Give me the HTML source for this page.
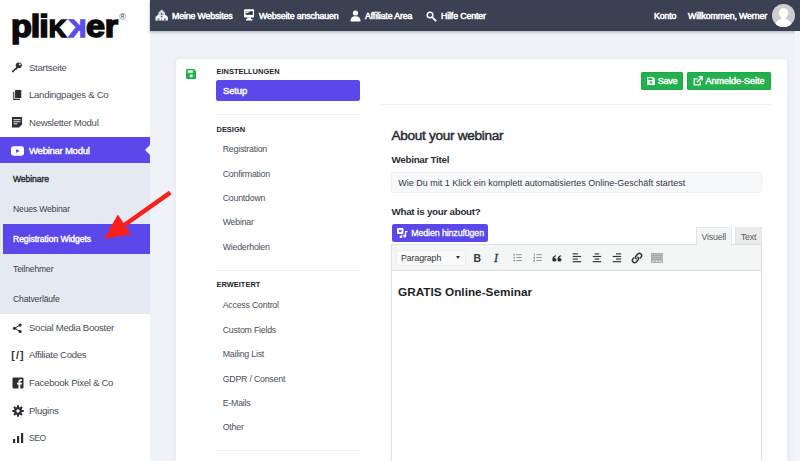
<!DOCTYPE html>
<html lang="de">
<head>
<meta charset="utf-8">
<title>plikker – Webinar Setup</title>
<style>
*{box-sizing:border-box;margin:0;padding:0}
html,body{width:800px;height:461px;overflow:hidden}
body{background:#eff2f7;font-family:"Liberation Sans",Arial,sans-serif;color:#3a3f4a;position:relative;font-size:10px}
.abs{position:absolute}
#sidebar{position:absolute;left:0;top:0;width:150px;height:461px;background:#fff}
#logo{position:absolute;left:0;top:0;width:150px;height:50px;font-weight:bold;font-size:31px;line-height:40px;color:#0b0b0b;white-space:nowrap}
#logo span{position:absolute;top:6.5px;-webkit-text-stroke:1.6px #0b0b0b;letter-spacing:-0.3px}
#logo .k{font-size:23px;text-transform:uppercase;top:8.8px;letter-spacing:0}
#logo .k2{transform:scaleX(-1);color:#5b4ee6;-webkit-text-stroke:1.6px #5b4ee6}
#logo sup{position:absolute;left:119.3px;top:11.8px;font-size:9px;font-weight:normal;line-height:10px;color:#444}
.nav{position:absolute;left:0;width:150px;height:28px;line-height:28px;font-size:9.6px;color:#4a4f58;white-space:nowrap;letter-spacing:-0.29px}
.nav span{position:absolute;left:29px;top:0}
.nav svg{position:absolute;left:12px;top:8px;width:12px;height:12px}
.nav.active{background:#5b48ea;color:#fff}
.nav.active span{-webkit-text-stroke:0.4px #fff}
#submenu{position:absolute;left:0;top:163px;width:150px;height:150.6px;background:#e5e9f1}
.sub{position:absolute;left:0;width:150px;height:30px;line-height:30px;font-size:8.6px;color:#3c4048;white-space:nowrap;padding-left:13px;letter-spacing:-0.17px}
.sub.b{color:#2b2e35;-webkit-text-stroke:0.4px #2b2e35;letter-spacing:-0.1px}
.sub.active{left:3px;width:147px;padding-left:10px;background:#5b48ea;color:#fff;-webkit-text-stroke:0.4px #fff;letter-spacing:-0.06px}
#topbar{position:absolute;left:150px;top:0;width:650px;height:30.6px;background:#3b4053;color:#fff;box-shadow:0 1px 3px rgba(40,45,60,.35)}
.tn{position:absolute;top:0;height:32px;line-height:32px;font-size:8.8px;color:#fff;white-space:nowrap;letter-spacing:-0.14px;-webkit-text-stroke:0.5px #fff}
.ti{position:absolute}
#card{position:absolute;left:176px;top:59px;width:610.8px;height:410px;background:#fff;border-radius:3px 3px 0 0;box-shadow:0 0 4px rgba(120,130,160,.12)}
.hd{position:absolute;left:216.5px;font-size:7.4px;font-weight:bold;color:#22252c;letter-spacing:0.05px;line-height:10px;white-space:nowrap}
.mi{position:absolute;left:222.7px;font-size:8.8px;color:#4a4f58;line-height:12px;white-space:nowrap;letter-spacing:-0.22px}
.hr{position:absolute;height:1px;background:#f0f2f5}
.btn{position:absolute;color:#fff;white-space:nowrap;border-radius:2.2px;-webkit-text-stroke:0.45px #fff}
.lbl{position:absolute;left:391.5px;font-weight:bold;color:#2b2e35;font-size:9.8px;line-height:12px;white-space:nowrap;letter-spacing:-0.27px}
</style>
</head>
<body>

<div id="sidebar">
  <div id="logo" title="plikker"><span style="left:11.2px;letter-spacing:-0.9px;transform:scaleX(1.1);transform-origin:0 0">pli</span><span class="k" style="left:49px;transform:scaleX(1.04);transform-origin:0 0">k</span><span class="k k2" style="left:68.6px;transform:scaleX(-1.04)">k</span><span style="left:86px;transform:scaleX(1.1);transform-origin:0 0;letter-spacing:-0.3px">er</span><sup>®</sup></div>

  <div class="nav" style="top:53.7px"><svg viewBox="0 0 12 12" style="width:11.4px;height:10.6px;left:11.4px;top:8.4px" preserveAspectRatio="none"><circle cx="8.2" cy="3.8" r="3.2" fill="#2b2e35"/><circle cx="9.2" cy="2.8" r="1" fill="#fff"/><path d="M6 5.5 L1 10.5 L1 11.5 L3 11.5 L3 10.3 L4.2 10.3 L4.2 9.1 L5.4 9.1 L7 7.2Z" fill="#2b2e35"/></svg><span>Startseite</span></div>
  <div class="nav" style="top:81.3px"><svg viewBox="0 0 12 12" style="width:10.6px;height:11.4px;left:11.6px;top:8.2px" preserveAspectRatio="none"><rect x="3.5" y="1" width="7" height="8.5" fill="#2b2e35"/><path d="M2 3 V11 H9" fill="none" stroke="#2b2e35" stroke-width="1.2"/></svg><span>Landingpages &amp; Co</span></div>
  <div class="nav" style="top:108.7px"><svg viewBox="0 0 12 12" style="width:12px;height:12.6px;left:11.2px;top:7.6px" preserveAspectRatio="none"><path d="M1 1 H11 V8 L8 11 H1Z" fill="#2b2e35"/><path d="M2.5 3.5H9.5M2.5 5.5H9.5M2.5 7.5H6.5" stroke="#fff" stroke-width="0.9"/></svg><span>Newsletter Modul</span></div>
  <div class="nav active" style="top:136.7px;height:26.6px;line-height:27px"><svg viewBox="0 0 14 10" style="left:11px;top:9px;width:13px;height:10px"><rect x="0" y="0" width="14" height="10" rx="2.6" fill="#fff"/><path d="M5.5 2.8 L9.3 5 L5.5 7.2Z" fill="#5b48ea"/></svg><span>Webinar Modul</span>
    <i style="position:absolute;right:0;top:8.3px;width:0;height:0;border-top:5.2px solid transparent;border-bottom:5.2px solid transparent;border-right:5.3px solid #eff2f7"></i>
  </div>
  <div id="submenu"></div>
  <div class="sub b" style="top:163.9px">Webinare</div>
  <div class="sub" style="top:193.7px">Neues Webinar</div>
  <div class="sub active" style="top:224.3px;height:29.4px">Registration Widgets</div>
  <div class="sub" style="top:253.9px">Teilnehmer</div>
  <div class="sub" style="top:283.9px">Chatverläufe</div>

  <div class="nav" style="top:313.9px"><svg viewBox="0 0 12 12" style="width:10.6px;height:10.6px;top:8.7px"><path d="M3 6 L9 2.5 M3 6 L9 9.5" stroke="#2b2e35" stroke-width="1.1"/><circle cx="2.8" cy="6" r="1.8" fill="#2b2e35"/><circle cx="9.2" cy="2.4" r="1.8" fill="#2b2e35"/><circle cx="9.2" cy="9.6" r="1.8" fill="#2b2e35"/></svg><span>Social Media Booster</span></div>
  <div class="nav" style="top:341.4px"><b style="position:absolute;left:11.3px;top:-0.5px;font-size:10.5px;letter-spacing:1.2px;color:#2b2e35">[/]</b><span>Affiliate Codes</span></div>
  <div class="nav" style="top:368.9px"><svg viewBox="0 0 12 12"><rect x="0.5" y="0.5" width="11" height="11" rx="1" fill="#2b2e35"/><path d="M8.3 12 V7.5 H9.8 L10 5.8 H8.3 V4.8 C8.3 4.2 8.5 4 9.1 4 H10 V2.4 C9.7 2.35 9.2 2.3 8.7 2.3 C7.3 2.3 6.5 3.1 6.5 4.6 V5.8 H5 V7.5 H6.5 V12Z" fill="#fff"/></svg><span>Facebook Pixel &amp; Co</span></div>
  <div class="nav" style="top:396.7px"><svg viewBox="0 0 12 12"><g fill="#2b2e35"><circle cx="6" cy="6" r="3.9"/><rect x="5" y="0.3" width="2" height="11.4"/><rect x="5" y="0.3" width="2" height="11.4" transform="rotate(45 6 6)"/><rect x="5" y="0.3" width="2" height="11.4" transform="rotate(90 6 6)"/><rect x="5" y="0.3" width="2" height="11.4" transform="rotate(135 6 6)"/></g><circle cx="6" cy="6" r="1.7" fill="#fff"/></svg><span>Plugins</span></div>
  <div class="nav" style="top:424px"><svg viewBox="0 0 12 12"><rect x="1" y="7" width="2.2" height="4" fill="#2b2e35"/><rect x="5" y="4" width="2.2" height="7" fill="#2b2e35"/><rect x="9" y="1" width="2.2" height="10" fill="#2b2e35"/></svg><span style="font-size:8.6px;letter-spacing:-0.5px">SEO</span></div>
</div>

<div id="topbar"></div>
<svg class="ti" style="left:155.4px;top:8.9px" width="13.4" height="12.4" viewBox="0 0 13.4 12.4"><path d="M6.7 0.4 L10 3.6 V7 H3.4 V3.6Z" fill="#d4d6dc"/><path d="M3.5 5.2 L6.6 8 V11.6 H0.5 V8Z" fill="#f4f5f7"/><path d="M9.9 5.2 L12.9 8 V11.6 H6.8 V8Z" fill="#f4f5f7"/><circle cx="6.7" cy="5" r="0.9" fill="#6b7080"/><path d="M2.6 11.6 V10.2 A0.9 0.9 0 0 1 4.4 10.2 V11.6Z M9 11.6 V10.2 A0.9 0.9 0 0 1 10.8 10.2 V11.6Z" fill="#6b7080"/></svg>
<div class="tn" style="left:172px">Meine Websites</div>
<svg class="ti" style="left:243.8px;top:9.4px" width="10.4" height="12" viewBox="0 0 10.4 12"><rect x="0" y="0.2" width="10.4" height="8.2" rx="1.2" fill="#fff"/><path d="M1.6 2.2 H8.8 V5.8 H1.6Z" fill="#2c3042"/><path d="M1.6 4.6 L5 3.6 L6.4 2.2 H1.6Z" fill="#e4e6ea"/><path d="M3.6 8.4 H6.8 L7.2 10 H8.4 V11.6 H2 V10 H3.2Z" fill="#fff"/></svg>
<div class="tn" style="left:259px">Webseite anschauen</div>
<svg class="ti" style="left:350px;top:10px" width="11" height="12" viewBox="0 0 11 12"><circle cx="5.5" cy="3" r="2.6" fill="#fff"/><path d="M0.5 11.5 C0.5 7.5 2.5 6.2 5.5 6.2 C8.5 6.2 10.5 7.5 10.5 11.5Z" fill="#fff"/></svg>
<div class="tn" style="left:365px">Affiliate Area</div>
<svg class="ti" style="left:426px;top:11px" width="10.5" height="10.5" viewBox="0 0 12 12"><circle cx="4.6" cy="4.6" r="3.2" fill="none" stroke="#fff" stroke-width="1.7"/><path d="M7 7 L11 11" stroke="#fff" stroke-width="2.2" stroke-linecap="round"/></svg>
<div class="tn" style="left:441px">Hilfe Center</div>
<div class="tn" style="left:654px">Konto</div>
<div class="tn" style="left:688px">Willkommen, Werner</div>
<svg class="ti" style="left:771.8px;top:3.8px" width="23" height="23" viewBox="0 0 24 24"><defs><clipPath id="av"><circle cx="12" cy="12" r="12"/></clipPath></defs><circle cx="12" cy="12" r="12" fill="#cecece"/><g clip-path="url(#av)" fill="#fff"><circle cx="12" cy="9.3" r="4.9"/><rect x="9.6" y="12" width="4.8" height="5"/><ellipse cx="12" cy="24" rx="9.2" ry="8.6"/></g></svg>

<div class="abs" style="left:795px;top:31px;width:5px;height:430px;background:#f3f5f9"></div>
<div id="card"></div>

<!-- green save icon -->
<svg class="abs" style="left:186px;top:69px" width="10.4" height="10" viewBox="0 0 11 11" preserveAspectRatio="none"><path d="M1.2 0 H8.3 L11 2.7 V9.8 Q11 11 9.8 11 H1.2 Q0 11 0 9.8 V1.2 Q0 0 1.2 0Z" fill="#22b14c"/><rect x="1.8" y="1.5" width="5.6" height="2.6" fill="#fff"/><circle cx="5.5" cy="7.4" r="1.7" fill="#fff"/></svg>

<div class="hd" style="top:66.8px">EINSTELLUNGEN</div>
<div class="btn" style="left:216px;top:80px;width:144px;height:21px;background:#5b48ea;font-size:9.4px;line-height:21px;padding-left:7px;letter-spacing:-0.1px">Setup</div>
<div class="hr" style="left:216px;top:114px;width:144px"></div>
<div class="hd" style="top:124.5px">DESIGN</div>
<div class="mi" style="top:143.2px">Registration</div>
<div class="mi" style="top:167.5px">Confirmation</div>
<div class="mi" style="top:192px">Countdown</div>
<div class="mi" style="top:216.3px">Webinar</div>
<div class="mi" style="top:240.7px">Wiederholen</div>
<div class="hr" style="left:216px;top:270px;width:144px"></div>
<div class="hd" style="top:280.3px">ERWEITERT</div>
<div class="mi" style="top:299.2px">Access Control</div>
<div class="mi" style="top:323.5px">Custom Fields</div>
<div class="mi" style="top:347.5px">Mailing List</div>
<div class="mi" style="top:372.5px">GDPR / Consent</div>
<div class="mi" style="top:396.5px">E-Mails</div>
<div class="mi" style="top:420.5px">Other</div>
<div class="hr" style="left:216px;top:450px;width:144px"></div>

<!-- right column -->
<div class="btn" style="left:641.2px;top:72px;width:42px;height:18.2px;background:#22b14c;box-shadow:inset 0 0 0 1px #1fa646;font-size:9px;line-height:18px;padding-left:16.5px;letter-spacing:-0.25px">Save
  <svg class="abs" style="left:6px;top:5px" width="8" height="8" viewBox="0 0 11 11"><path d="M1.2 0 H8.3 L11 2.7 V9.8 Q11 11 9.8 11 H1.2 Q0 11 0 9.8 V1.2 Q0 0 1.2 0Z" fill="#fff"/><rect x="1.8" y="1.5" width="5.6" height="2.6" fill="#22b14c"/><circle cx="5.5" cy="7.4" r="1.7" fill="#22b14c"/></svg>
</div>
<div class="btn" style="left:687px;top:72px;width:84.3px;height:18.2px;background:#22b14c;box-shadow:inset 0 0 0 1px #1fa646;font-size:9px;line-height:18px;padding-left:18.4px">Anmelde-Seite
  <svg class="abs" style="left:6px;top:4px" width="10" height="10" viewBox="0 0 10 10"><path d="M7.2 5.5 V8.8 H1.2 V2.8 H4.5" fill="none" stroke="#fff" stroke-width="1.3"/><path d="M3.8 6.2 L8.8 1.2 M5.6 0.8 H9.2 V4.4" fill="none" stroke="#fff" stroke-width="1.4"/></svg>
</div>
<div class="hr" style="left:379px;top:104px;width:394px"></div>

<div class="abs" style="left:391.5px;top:128px;font-size:13.6px;line-height:16px;color:#262930;white-space:nowrap;letter-spacing:-0.3px;-webkit-text-stroke:0.45px #262930">About your webinar</div>
<div class="lbl" style="top:154px">Webinar Titel</div>
<div class="abs" style="left:391px;top:172px;width:371px;height:21px;background:#f8f9fb;border:1px solid #f0f1f5;border-radius:2px;font-size:9px;line-height:20px;padding-left:6.2px;color:#33363d;white-space:nowrap">Wie Du mit 1 Klick ein komplett automatisiertes Online-Geschäft startest</div>
<div class="lbl" style="top:205.5px">What is your about?</div>

<div class="btn" style="left:391.5px;top:223.7px;width:96.5px;height:18.2px;background:#5b48ea;font-size:8.8px;line-height:18px;padding-left:19.8px;letter-spacing:-0.1px;-webkit-text-stroke:0.3px #fff">Medien hinzufügen
  <svg class="abs" style="left:5px;top:4px" width="11" height="10" viewBox="0 0 11 10"><rect x="0" y="0" width="6.5" height="6" rx="1" fill="#fff"/><circle cx="3.2" cy="3" r="1.3" fill="#5b48ea"/><path d="M8 3 H10.5 V4.2 H9.2 V8 A1.5 1.5 0 1 1 8 6.6Z" fill="#fff"/><path d="M5.2 6.5 V9 A1.3 1.3 0 1 1 4.2 7.7 V6.5Z" fill="#fff"/></svg>
</div>

<!-- editor -->
<div class="abs" style="left:735px;top:227px;width:27px;height:18px;background:#ebebeb;border:1px solid #e4e5e7;border-bottom:none;font-size:8.8px;line-height:18px;text-align:center;color:#585c64;letter-spacing:-0.2px">Text</div>
<div class="abs" style="left:391px;top:244px;width:371px;height:220px;background:#fff;border:1px solid #dedfe1"></div>
<div class="abs" style="left:392px;top:245px;width:369px;height:26px;background:#f4f5f5;border-bottom:1px solid #dedfe1"></div>
<div class="abs" style="left:695.5px;top:227px;width:36.5px;height:18.5px;background:#f4f5f5;border:1px solid #e4e5e7;border-bottom:none;font-size:8.8px;line-height:18px;text-align:center;color:#585c64;letter-spacing:-0.2px">Visuell</div>
<div class="abs" style="left:395.5px;top:250px;width:70px;height:15.5px;background:#fafafa;border:1px solid #ececec;border-radius:2px"></div>
<div class="abs" style="left:401px;top:251.5px;font-size:8.8px;line-height:12px;color:#33363d;letter-spacing:-0.1px">Paragraph</div>
<div class="abs" style="left:456px;top:256px;width:0;height:0;border-left:2.5px solid transparent;border-right:2.5px solid transparent;border-top:3.5px solid #33363d"></div>
<div class="abs" style="left:473.6px;top:252.9px;font-size:10.4px;line-height:12px;font-weight:bold;color:#33363d">B</div>
<div class="abs" style="left:494px;top:252.2px;font-size:12px;line-height:12px;font-style:italic;font-family:'Liberation Serif',serif;color:#33363d;-webkit-text-stroke:0.3px #33363d">I</div>
<svg class="abs" style="left:512.6px;top:253.4px" width="9.2" height="9.2" viewBox="0 0 10 10"><g fill="#8a8d93"><rect x="0.5" y="1" width="1.6" height="1.6"/><rect x="0.5" y="4.2" width="1.6" height="1.6"/><rect x="0.5" y="7.4" width="1.6" height="1.6"/><rect x="3.5" y="1.3" width="6" height="1"/><rect x="3.5" y="4.5" width="6" height="1"/><rect x="3.5" y="7.7" width="6" height="1"/></g></svg>
<svg class="abs" style="left:532.6px;top:253.4px" width="9.2" height="9.2" viewBox="0 0 10 10"><g fill="#8a8d93"><rect x="1" y="0.6" width="0.9" height="2.4"/><rect x="0.5" y="4" width="1.6" height="2"/><rect x="0.5" y="7.2" width="1.6" height="2.2"/><rect x="3.5" y="1.3" width="6" height="1"/><rect x="3.5" y="4.5" width="6" height="1"/><rect x="3.5" y="7.7" width="6" height="1"/></g></svg>
<svg class="abs" style="left:552.3px;top:254.6px" width="9.8" height="7.6" viewBox="0 0 10 9" preserveAspectRatio="none"><g fill="#2b2e35"><path d="M0.3 5.6 C0.3 2.6 1.6 0.8 4 0.2 L4.3 1.2 C3 1.8 2.4 2.6 2.4 3.6 C3.6 3.5 4.5 4.4 4.5 5.6 C4.5 6.9 3.6 7.8 2.4 7.8 C1.1 7.8 0.3 6.9 0.3 5.6Z"/><path d="M5.5 5.6 C5.5 2.6 6.8 0.8 9.2 0.2 L9.5 1.2 C8.2 1.8 7.6 2.6 7.6 3.6 C8.8 3.5 9.7 4.4 9.7 5.6 C9.7 6.9 8.8 7.8 7.6 7.8 C6.3 7.8 5.5 6.9 5.5 5.6Z"/></g></svg>
<svg class="abs" style="left:572px;top:252.8px" width="10" height="10" viewBox="0 0 10 10"><g fill="#33363d"><rect x="0.7" y="0.3" width="5.2" height="1.15"/><rect x="0.7" y="2.9" width="8.5" height="1.15"/><rect x="0.7" y="5.5" width="5.2" height="1.15"/><rect x="0.7" y="8.1" width="8.5" height="1.15"/></g></svg>
<svg class="abs" style="left:592px;top:252.8px" width="10" height="10" viewBox="0 0 10 10"><g fill="#33363d"><rect x="2.6" y="0.3" width="4.6" height="1.15"/><rect x="0.7" y="2.9" width="8.5" height="1.15"/><rect x="2.6" y="5.5" width="4.6" height="1.15"/><rect x="0.7" y="8.1" width="8.5" height="1.15"/></g></svg>
<svg class="abs" style="left:612px;top:252.8px" width="10" height="10" viewBox="0 0 10 10"><g fill="#33363d"><rect x="4" y="0.3" width="5.2" height="1.15"/><rect x="0.7" y="2.9" width="8.5" height="1.15"/><rect x="4" y="5.5" width="5.2" height="1.15"/><rect x="0.7" y="8.1" width="8.5" height="1.15"/></g></svg>
<svg class="abs" style="left:631px;top:251.5px" width="12" height="12" viewBox="0 0 12 12"><g fill="none" stroke="#33363d" stroke-width="1.5" stroke-linecap="round"><path d="M5.2 6.8 A2.2 2.2 0 0 1 5.2 3.7 L7 1.9 A2.2 2.2 0 0 1 10.1 5 L9.2 5.9"/><path d="M6.8 5.2 A2.2 2.2 0 0 1 6.8 8.3 L5 10.1 A2.2 2.2 0 0 1 1.9 7 L2.8 6.1"/></g></svg>
<svg class="abs" style="left:651px;top:252.5px" width="11.8" height="10.5" viewBox="0 0 12 10.5"><rect x="0" y="0" width="12" height="10.5" fill="#a3a6ab"/><g fill="#c9cbcf"><rect x="0.8" y="1.2" width="10.4" height="0.7"/><rect x="0.8" y="3.2" width="10.4" height="0.7"/><rect x="0.8" y="5.2" width="10.4" height="0.7"/></g><g fill="#d9dbde"><rect x="1" y="7.4" width="2.8" height="1.8"/><rect x="4.6" y="7.4" width="2.8" height="1.8"/><rect x="8.2" y="7.4" width="2.8" height="1.8"/></g></svg>

<div class="abs" style="left:398px;top:284px;font-size:11.8px;line-height:16px;font-weight:bold;color:#1d1f24;white-space:nowrap">GRATIS Online-Seminar</div>

<!-- red arrow -->
<svg class="abs" style="left:90px;top:180px" width="100" height="70" viewBox="90 180 100 70"><path d="M170.2 192.6 L123 226" stroke="#f9201b" stroke-width="4.4" fill="none"/><path d="M104.2 238.8 L117.8 214.6 L131.3 234.3Z" fill="#f9201b"/></svg>

</body>
</html>
